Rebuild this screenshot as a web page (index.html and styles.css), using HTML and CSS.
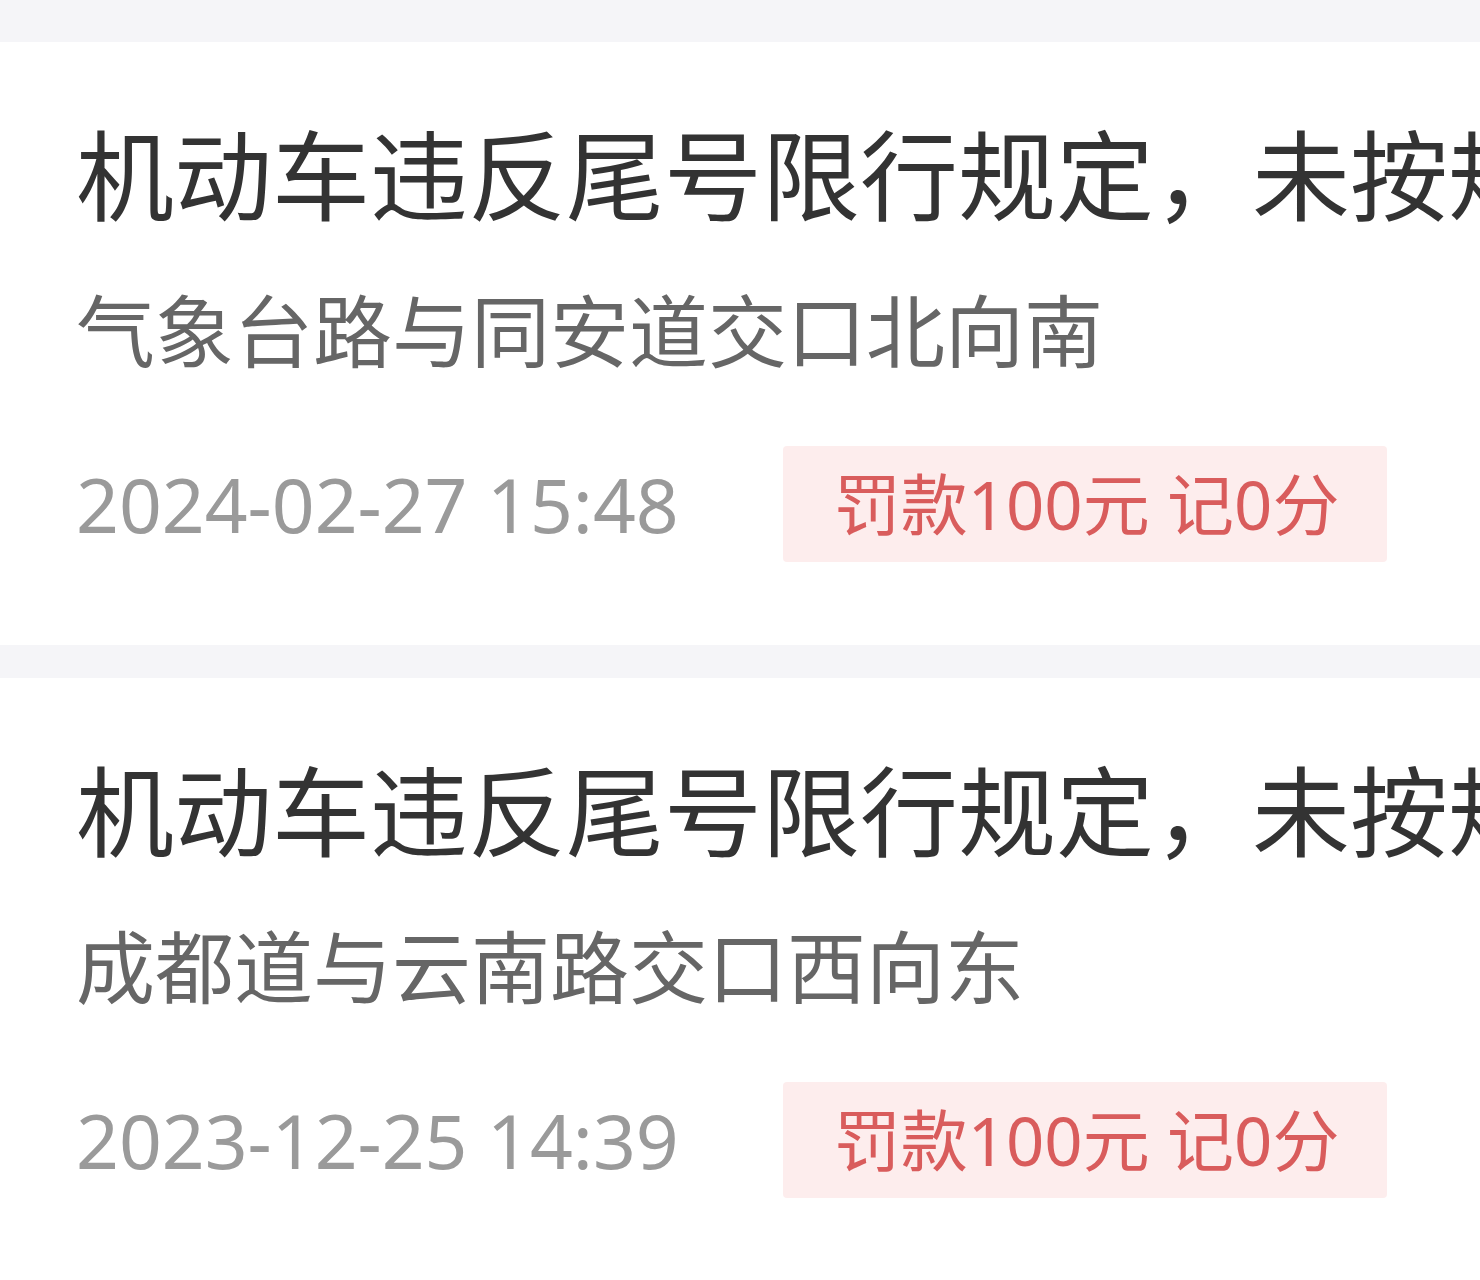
FILE: index.html
```html
<!DOCTYPE html>
<html lang="zh-CN">
  <head>
    <meta charset="UTF-8" />
    <meta name="viewport" content="width=device-width, initial-scale=1.0" />
    <title>违法记录</title>
    <link rel="stylesheet" href="styles.css">
  </head>
  <body>
    <div class="list">
      <div class="record">
        <h2 class="record-title">机动车违反尾号限行规定，未按规定时间、路段行驶的</h2>
        <p class="record-place">气象台路与同安道交口北向南</p>
        <div class="record-meta">
          <span class="record-time">2024-02-27 15:48</span>
          <span class="record-fine">罚款100元 记0分</span>
        </div>
      </div>
      <div class="record">
        <h2 class="record-title">机动车违反尾号限行规定，未按规定时间、路段行驶的</h2>
        <p class="record-place">成都道与云南路交口西向东</p>
        <div class="record-meta">
          <span class="record-time">2023-12-25 14:39</span>
          <span class="record-fine">罚款100元 记0分</span>
        </div>
      </div>
    </div>
  </body>
</html>
```

FILE: styles.css
```css
*{
    margin: 0;
    padding: 0;
    box-sizing: border-box;
}
body{
    background-color: #f5f5f8;
    font-family: "Noto Sans", "Noto Sans CJK SC", sans-serif;
    overflow: hidden;
}
.list{
    display: flex;
    flex-direction: column;
    gap: 33px;
    padding-top: 42px;
}
.record{
    background-color: #fff;
    padding: 70px 0 83px 76px;
    overflow: hidden;
}
/* long titles are clipped at the card edge */
.record-title{
    font-family: "Noto Sans CJK SC", sans-serif;
    font-size: 98px;
    font-weight: 400;
    line-height: 116px;
    color: #333;
    white-space: nowrap;
}
.record-place{
    font-family: "Noto Sans CJK SC", sans-serif;
    margin-top: 50px;
    font-size: 79px;
    line-height: 100px;
    color: #666;
    white-space: nowrap;
}
.record-meta{
    display: flex;
    align-items: center;
    gap: 104px;
    margin-top: 68px;
}
.record-time{
    font-size: 75px;
    color: #9a9a9a;
    line-height: 116px;
}
.record-fine{
    display: inline-block;
    background-color: #fdeded;
    color: #d95c5c;
    font-size: 67px;
    line-height: 116px;
    padding: 0 48px 0 51px;
    border-radius: 4px;
}
```
